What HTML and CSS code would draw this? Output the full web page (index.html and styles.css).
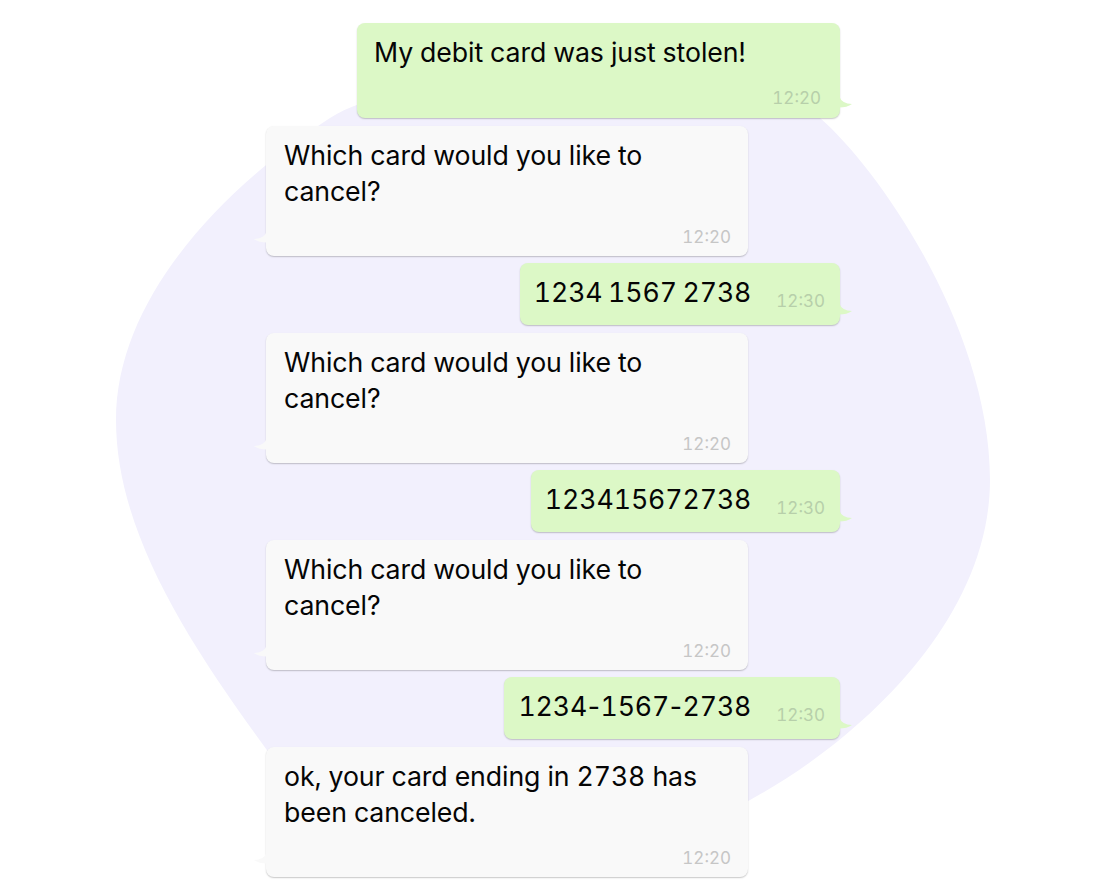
FILE: index.html
```html
<!DOCTYPE html>
<html lang="en">
<head>
<meta charset="utf-8">
<title>Chat</title>
<link rel="stylesheet" href="styles.css">
</head>
<body>
<div class="stage">
  <svg class="blob" width="1106" height="886" viewBox="0 0 1106 886" aria-hidden="true">
    <path d="M330 118 C420 60 740 70 820 118 C880 170 990 330 990 480 C990 620 860 740 750 800 C620 880 420 900 334 840 C230 700 116 560 116 420 C116 300 220 190 330 118 Z" fill="#f2f0fd"/>
  </svg>
  <div class="chat">
    <div class="bubble out long">
      <p class="text">My debit card was just stolen!</p>
      <span class="time">12:20</span>
      <svg class="tail tail-out" width="14" height="12" viewBox="0 0 14 12"><path d="M0 0 Q3 8 13 8 Q8 11.5 0 11.5 Z"/></svg>
    </div>
    <div class="bubble in">
      <p class="text">Which card would you like to cancel?</p>
      <span class="time">12:20</span>
      <svg class="tail tail-in" width="14" height="12" viewBox="0 0 14 12"><path d="M14 0 Q11 8 1 8 Q6 11.5 14 11.5 Z"/></svg>
    </div>
    <div class="bubble out short">
      <p class="text">1234 1567 2738</p>
      <span class="time">12:30</span>
      <svg class="tail tail-out" width="14" height="12" viewBox="0 0 14 12"><path d="M0 0 Q3 8 13 8 Q8 11.5 0 11.5 Z"/></svg>
    </div>
    <div class="bubble in">
      <p class="text">Which card would you like to cancel?</p>
      <span class="time">12:20</span>
      <svg class="tail tail-in" width="14" height="12" viewBox="0 0 14 12"><path d="M14 0 Q11 8 1 8 Q6 11.5 14 11.5 Z"/></svg>
    </div>
    <div class="bubble out short">
      <p class="text">123415672738</p>
      <span class="time">12:30</span>
      <svg class="tail tail-out" width="14" height="12" viewBox="0 0 14 12"><path d="M0 0 Q3 8 13 8 Q8 11.5 0 11.5 Z"/></svg>
    </div>
    <div class="bubble in">
      <p class="text">Which card would you like to cancel?</p>
      <span class="time">12:20</span>
      <svg class="tail tail-in" width="14" height="12" viewBox="0 0 14 12"><path d="M14 0 Q11 8 1 8 Q6 11.5 14 11.5 Z"/></svg>
    </div>
    <div class="bubble out short">
      <p class="text">1234<span class="dash">-</span>1567<span class="dash">-</span>2738</p>
      <span class="time">12:30</span>
      <svg class="tail tail-out" width="14" height="12" viewBox="0 0 14 12"><path d="M0 0 Q3 8 13 8 Q8 11.5 0 11.5 Z"/></svg>
    </div>
    <div class="bubble in">
      <p class="text">ok, your card ending in 2738 has been canceled.</p>
      <span class="time">12:20</span>
      <svg class="tail tail-in" width="14" height="12" viewBox="0 0 14 12"><path d="M14 0 Q11 8 1 8 Q6 11.5 14 11.5 Z"/></svg>
    </div>
  </div>
</div>
</body>
</html>
```

FILE: styles.css
```css
* { box-sizing: border-box; }

html, body {
  margin: 0;
  padding: 0;
  background: #ffffff;
}

body {
  font-family: Inter, "Noto Sans", "Liberation Sans", sans-serif;
  color: #050505;
}

.stage {
  position: relative;
  width: 1106px;
  height: 886px;
  overflow: hidden;
}

.blob {
  position: absolute;
  left: 0;
  top: 0;
}

.chat {
  position: relative;
  width: 574px;
  margin: 0 auto;
  padding-top: 23px;
  display: flex;
  flex-direction: column;
  gap: 7.5px;
}

.bubble {
  position: relative;
  border-radius: 8px;
  box-shadow: 0 1px 1.5px rgba(0, 0, 0, 0.22);
}

.text {
  margin: 0;
  font-size: 26.7px;
  line-height: 36px;
  letter-spacing: -0.1px;
  font-variant-numeric: tabular-nums;
}

.time {
  font-size: 17px;
  line-height: 20px;
  font-variant-numeric: tabular-nums;
}

.out {
  align-self: flex-end;
  background: #dcf8c6;
}

.out .time { color: #b7cfaa; }

.in {
  align-self: flex-start;
  width: 482px;
  height: 130px;
  background: #f9f9f9;
  padding: 11px 17px 0 18px;
  display: flex;
  flex-direction: column;
}

.in .text { height: 72px; }

.in .time {
  color: #c6c6c6;
  align-self: flex-end;
  margin-top: 18px;
}

.long {
  width: 483px;
  height: 95px;
  padding: 11px 19px 0 17px;
  display: flex;
  flex-direction: column;
}

.long .time {
  align-self: flex-end;
  margin-top: 18px;
}

.short {
  height: 62px;
  padding: 11px 15px 0 14px;
  display: flex;
  align-items: flex-start;
  gap: 25px;
}

.short .text {
  word-spacing: -1.5px;
}

.short .dash {
  margin: 0 -2px;
}

.short .time {
  margin-top: 17px;
}

.tail {
  position: absolute;
  bottom: 10px;
}

.tail-out {
  right: -13px;
  fill: #dcf8c6;
}

.tail-in {
  left: -13px;
  bottom: 13px;
  fill: #f9f9f9;
}
```
